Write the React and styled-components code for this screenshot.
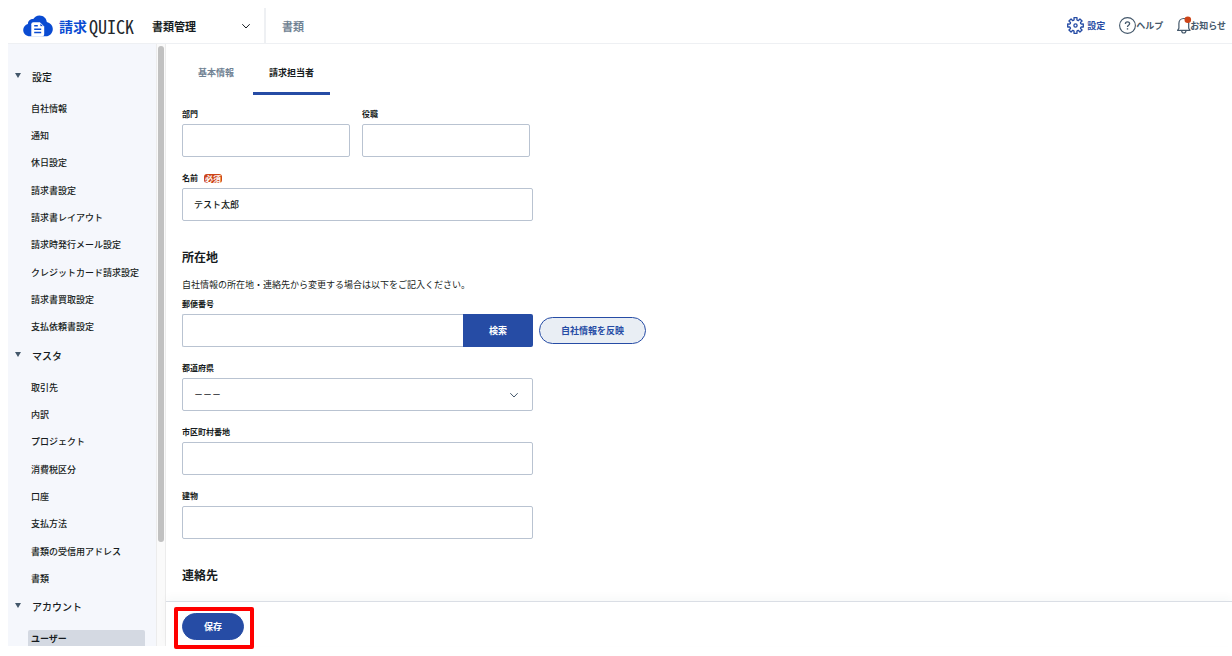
import React from "react";
import styled, { createGlobalStyle, css } from "styled-components";

const color = {
  ink: "#161b20",
  muted: "#708293",
  slate: "#44586b",
  blue: "#264ca5",
  brand: "#0a4bd2",
  border: "#b9c3d1",
  line: "#eef0f3",
  side: "#f5f7fc",
  alert: "#cd4418",
};

const GlobalStyle = createGlobalStyle`
  *, *::before, *::after { box-sizing: border-box; }
  body {
    margin: 0;
    background: #fff;
    color: ${color.ink};
    font-family: "Noto Sans CJK JP", sans-serif;
    font-size: 9px;
    line-height: 14px;
  }
  button, input, select { font: inherit; color: inherit; margin: 0; }
  a { color: inherit; text-decoration: none; }
`;

const Page = styled.div`
  display: flex;
  flex-direction: column;
  height: 100vh;
  padding: 8px 0 10px 8px;
`;

const Header = styled.header`
  display: flex;
  flex: none;
  height: 36px;
  border-bottom: 1px solid ${color.line};
`;

const Logo = styled.a`
  display: flex;
  align-items: center;
  width: 129px;
  padding-left: 15px;
  color: ${color.brand};
  font-size: 14px;
  font-weight: 700;
  line-height: 20px;
  white-space: nowrap;

  svg { flex: none; margin-right: 6px; }
`;

const Latin = styled.span`
  margin-left: 2px;
  color: #24282c;
  font-family: "Noto Sans Mono CJK JP", "Noto Sans CJK JP", sans-serif;
  font-size: 18px;
  font-weight: 300;
  font-feature-settings: "hwid";
`;

const ModuleSwitch = styled.label`
  display: grid;
  align-items: center;
  width: 129px;
  padding: 0 14px 0 15px;
  border-right: 2px solid ${color.line};

  select, svg { grid-area: 1 / 1; }
  svg { justify-self: end; pointer-events: none; }
`;

const BareSelect = styled.select`
  appearance: none;
  width: 100%;
  height: 24px;
  padding: 0;
  border: 0;
  background: none;
  font-size: 11px;
  font-weight: 700;
`;

const HeaderLink = styled.a`
  display: flex;
  align-items: center;
  padding: 0 16px;
  color: ${color.muted};
  font-size: 11px;
  font-weight: 700;
`;

const Tools = styled.nav`
  display: flex;
  align-items: center;
  gap: 14px;
  margin-left: auto;
  padding-right: 6px;
`;

const Tool = styled.a`
  display: flex;
  align-items: center;
  gap: ${(p) => (p.$active ? "3px" : "0")};
  color: ${(p) => (p.$active ? color.blue : color.slate)};
  font-weight: 700;

  svg { flex: none; overflow: visible; }
`;

const Body = styled.div`
  display: flex;
  flex: 1;
  min-height: 0;
`;

const Sidebar = styled.nav`
  flex: none;
  width: 148px;
  padding: 18px 11px 0 7px;
  overflow: hidden;
  background: ${color.side};
`;

const Group = styled.details`
  summary {
    display: flex;
    align-items: center;
    gap: 11px;
    height: 30px;
    margin-bottom: 3px;
    font-size: 10px;
    font-weight: 500;
    list-style: none;
    cursor: pointer;
  }
`;

const Items = styled.ul`
  margin: 0;
  padding: 0 0 0 13px;
  list-style: none;

  li { padding: 5px 0 4px; }
  li:nth-child(3n) { margin-bottom: 1px; }
`;

const ItemLink = styled.a`
  display: block;
  height: 18px;
  padding-left: 3px;
  border-radius: 2px;
  line-height: 18px;
  font-weight: 500;
  white-space: nowrap;
  ${(p) =>
    p.$current &&
    css`
      background: #d4d9e2;
      font-weight: 700;
    `}
`;

const Track = styled.div`
  flex: none;
  width: 10px;
  padding: 2px 1px;
  border: solid #ececec;
  border-width: 0 1px;
  background: #fafafa;
`;

const Thumb = styled.div`
  width: 6px;
  height: 83%;
  border-radius: 3px;
  background: #c1c1c1;
`;

const Main = styled.main`
  display: flex;
  flex: 1;
  flex-direction: column;
  min-width: 0;
`;

const Content = styled.div`
  flex: 1;
  min-height: 0;
  padding: 0 16px;
  overflow: hidden;
`;

const Tabs = styled.div`
  display: flex;
  gap: 3px;
  height: 51px;
  margin-bottom: 13px;
`;

const Tab = styled.button`
  padding: 10px 16px 0;
  border: 0;
  border-bottom: 3px solid ${(p) => (p.$active ? color.blue : "transparent")};
  background: none;
  color: ${(p) => (p.$active ? color.ink : color.muted)};
  font-weight: 700;
`;

const Fields = styled.div`
  display: flex;
  flex-direction: column;
  gap: 15px;
`;

const Pair = styled.div`
  display: grid;
  grid-template-columns: 1fr 1fr;
  gap: 12px;
  max-width: 348px;
`;

const FieldBox = styled.div`
  max-width: ${(p) => (p.$wide ? "none" : "351px")};
`;

const Label = styled.label`
  display: flex;
  align-items: center;
  gap: 6px;
  height: 12px;
  margin-bottom: 4px;
  font-size: 8px;
  font-weight: 700;
`;

const Required = styled.span`
  padding: 0 1px;
  border-radius: 3px;
  background: ${color.alert};
  color: #fff;
  line-height: 9px;
`;

const control = css`
  display: block;
  width: 100%;
  height: 33px;
  padding: 0 11px;
  border: 1px solid ${color.border};
  border-radius: 2px;
  background: #fff;
  font-weight: 500;
`;

const Input = styled.input`
  ${control}
`;

const SelectWrap = styled.div`
  display: grid;
  align-items: center;

  select, svg { grid-area: 1 / 1; }
  svg { justify-self: end; margin-right: 15px; pointer-events: none; }
`;

const Select = styled.select`
  ${control}
  appearance: none;
`;

const PostalRow = styled.div`
  display: flex;
  align-items: center;
  gap: 6px;
`;

const Search = styled.div`
  display: flex;
  flex: 0 1 351px;

  input { border-radius: 2px 0 0 2px; border-right: 0; }
`;

const SearchButton = styled.button`
  flex: none;
  width: 70px;
  border: 0;
  border-radius: 0 2px 2px 0;
  background: ${color.blue};
  color: #fff;
  font-weight: 700;
`;

const Pill = styled.button`
  height: 27px;
  padding: 0 21px;
  border: 1px solid ${color.blue};
  border-radius: 14px;
  background: ${(p) => (p.$primary ? color.blue : "#e9eef4")};
  color: ${(p) => (p.$primary ? "#fff" : color.blue)};
  font-weight: 700;
  white-space: nowrap;
`;

const Heading = styled.h2`
  margin: 27px 0 12px;
  font-size: 12px;
  line-height: 18px;
  font-weight: 700;
`;

const Note = styled.p`
  margin: 0 0 6px;
`;

const Footer = styled.footer`
  flex: none;
  height: 45px;
  padding: 11px 16px;
  border-top: 1px solid #dadee5;
  box-shadow: 0 -4px 8px rgba(40, 50, 70, 0.03);
`;

const Highlight = styled.div`
  position: relative;
  width: fit-content;

  &::after {
    content: "";
    position: absolute;
    inset: -6px -10px -9px -8px;
    border: 4px solid #f00;
    border-radius: 2px;
    pointer-events: none;
  }
`;

const Chevron = ({ stroke = color.slate }) => (
  <svg width="8" height="8" viewBox="0 0 8 8" fill="none" stroke={stroke} strokeWidth="1" aria-hidden="true">
    <path d="M.3 2.200L4 6l3.700-3.800" />
  </svg>
);

const Triangle = () => (
  <svg width="6" height="8" viewBox="0 0 6 8" aria-hidden="true">
    <path d="M0 0h6L3 5z" fill={color.slate} />
  </svg>
);

const CloudMark = () => (
  <svg width="30" height="22" viewBox="0 0 30 22" aria-hidden="true">
    <path
      d="M7 21.300C3 21.300.2 18.600.2 15c0-3 2-5.400 4.700-6.100C5 6 7.400 4 10.300 4.100 11.500 1.800 13.800.4 16.500.4c4 0 7 2.800 7.300 6.600C27.300 7.800 29.800 10.500 29.800 14c0 4-3 7.300-7 7.300z"
      fill={color.brand}
    />
    <path d="M8.300 21.500V9.200q0-2 2-2h6.400l4.500 4.500v7.300q0 2.500-2.500 2.500z" fill="#fff" />
    <path d="M17 7.800v3.800h3.800z" fill={color.brand} stroke="#fff" strokeWidth=".8" />
    <path d="M11.200 10.800h3.600M11.200 14.200h7M11.200 17.600h7" stroke={color.brand} strokeWidth="1.500" />
  </svg>
);

const TEETH = 8;
const gearPath = Array.from({ length: TEETH }, (_, i) => {
  const at = (r, deg) => {
    const a = ((i * 360) / TEETH + deg - 90) * (Math.PI / 180);
    return `${(9 + r * Math.cos(a)).toFixed(2)} ${(9 + r * Math.sin(a)).toFixed(2)}`;
  };
  return `${i ? "L" : "M"}${at(6.2, -14)}L${at(8.4, -11)}L${at(8.4, 11)}L${at(6.2, 14)}Q${at(5.6, 22.5)} ${at(6.2, 31)}`;
}).join("");

const Gear = () => (
  <svg width="17" height="17" viewBox="0 0 18 18" fill="none" stroke="currentColor" strokeWidth="1.400" strokeLinejoin="round" aria-hidden="true">
    <path d={`${gearPath}z`} />
    <circle cx="9" cy="9" r="1.700" />
  </svg>
);

const Help = () => (
  <svg width="17" height="17" viewBox="0 0 17 17" fill="none" stroke="currentColor" strokeWidth="1.100" aria-hidden="true">
    <circle cx="8.500" cy="8.500" r="7.900" />
    <path d="M6.400 7c0-1.300.9-2.100 2.100-2.100s2.100.8 2.100 1.900c0 1.500-2.100 1.500-2.100 3.200" strokeWidth="1.300" />
    <path d="M8.500 11.200v1.400" strokeWidth="1.400" />
  </svg>
);

const Bell = () => (
  <svg width="13" height="17" viewBox="0 0 13 17" fill="none" stroke="currentColor" strokeWidth="1.200" strokeLinejoin="round" aria-hidden="true">
    <path d="M.6 13.400h12.400L11.700 11.300V6.500c0-3-2-5-4.900-5s-4.900 2-4.900 5v4.800z" />
    <path d="M4.600 13.600c.2 1.700 1 2.400 2.200 2.400s2-.7 2.200-2.400" />
    <circle cx="10.800" cy="2.800" r="3.300" fill={color.alert} stroke="none" />
  </svg>
);

const groups = [
  {
    title: "設定",
    items: ["自社情報", "通知", "休日設定", "請求書設定", "請求書レイアウト", "請求時発行メール設定", "クレジットカード請求設定", "請求書買取設定", "支払依頼書設定"],
  },
  {
    title: "マスタ",
    items: ["取引先", "内訳", "プロジェクト", "消費税区分", "口座", "支払方法", "書類の受信用アドレス", "書類"],
  },
  { title: "アカウント", items: ["ユーザー"] },
];

function Field({ id, label, required, wide, children, ...rest }) {
  return (
    <FieldBox $wide={wide}>
      <Label htmlFor={id}>
        {label}
        {required && <Required>必須</Required>}
      </Label>
      {children || <Input id={id} type="text" {...rest} />}
    </FieldBox>
  );
}

export default function App() {
  return (
    <Page>
      <GlobalStyle />
      <Header>
        <Logo href="#">
          <CloudMark />
          請求<Latin>QUICK</Latin>
        </Logo>
        <ModuleSwitch>
          <BareSelect aria-label="メニュー">
            <option>書類管理</option>
          </BareSelect>
          <Chevron stroke={color.ink} />
        </ModuleSwitch>
        <HeaderLink href="#">書類</HeaderLink>
        <Tools>
          <Tool href="#" $active><Gear />設定</Tool>
          <Tool href="#"><Help />ヘルプ</Tool>
          <Tool href="#"><Bell />お知らせ</Tool>
        </Tools>
      </Header>
      <Body>
        <Sidebar>
          {groups.map((g) => (
            <Group key={g.title} open>
              <summary><Triangle />{g.title}</summary>
              <Items>
                {g.items.map((name) => (
                  <li key={name}>
                    <ItemLink href="#" $current={name === "ユーザー"}>{name}</ItemLink>
                  </li>
                ))}
              </Items>
            </Group>
          ))}
        </Sidebar>
        <Track><Thumb /></Track>
        <Main>
          <Content>
            <Tabs role="tablist">
              <Tab role="tab" aria-selected="false">基本情報</Tab>
              <Tab role="tab" aria-selected="true" $active>請求担当者</Tab>
            </Tabs>
            <Fields>
              <Pair>
                <Field id="dept" label="部門" />
                <Field id="post" label="役職" />
              </Pair>
              <Field id="name" label="名前" required defaultValue="テスト太郎" />
            </Fields>
            <Heading>所在地</Heading>
            <Note>自社情報の所在地・連絡先から変更する場合は以下をご記入ください。</Note>
            <Fields>
              <Field id="zip" label="郵便番号" wide>
                <PostalRow>
                  <Search>
                    <Input id="zip" type="text" />
                    <SearchButton>検索</SearchButton>
                  </Search>
                  <Pill>自社情報を反映</Pill>
                </PostalRow>
              </Field>
              <Field id="pref" label="都道府県">
                <SelectWrap>
                  <Select id="pref">
                    <option>－－－</option>
                  </Select>
                  <Chevron />
                </SelectWrap>
              </Field>
              <Field id="city" label="市区町村番地" />
              <Field id="building" label="建物" />
            </Fields>
            <Heading>連絡先</Heading>
          </Content>
          <Footer>
            <Highlight>
              <Pill $primary>保存</Pill>
            </Highlight>
          </Footer>
        </Main>
      </Body>
    </Page>
  );
}
